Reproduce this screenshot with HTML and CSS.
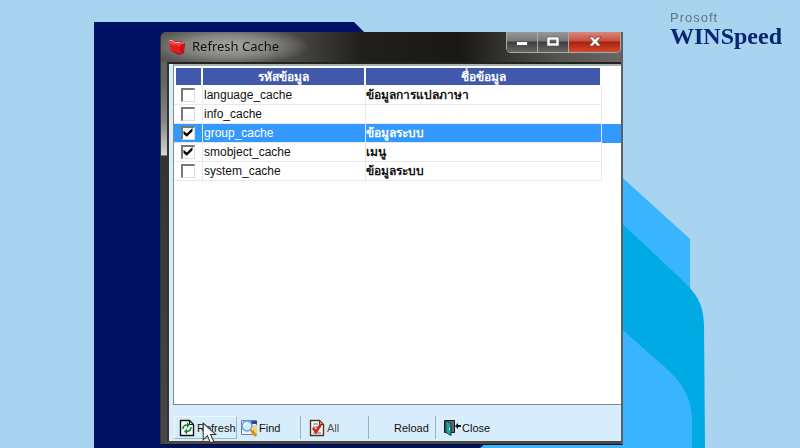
FILE: index.html
```html
<!DOCTYPE html>
<html lang="th">
<head>
<meta charset="utf-8">
<meta name="viewport" content="width=device-width, initial-scale=1">
<title>Refresh Cache</title>
<link rel="stylesheet" href="styles.css">
</head>
<body>
<svg class="backdrop" viewBox="0 0 800 448" preserveAspectRatio="xMinYMin slice" aria-hidden="true">
  <path fill="#39b5ff" d="M560 121 690 239V448H480V380Z"/>
  <path fill="#00aae3" d="M600 203 680 278C696 293 703 302 704 325L705 448H600Z"/>
  <path fill="#39b5ff" d="M600 310 668 370C686 387 691 400 692 420V448H480V440H600Z"/>
  <path fill="#001263" d="M94 22H354L620 285V448H94Z"/>
  <path fill="#39b5ff" d="M480 448 486 443H640V448Z"/>
</svg>
<main class="stage">
  <section class="window" aria-label="Refresh Cache">
    <header class="titlebar">
      <svg class="folder" viewBox="0 0 18 18" aria-hidden="true">
        <path fill="#9c1015" d="M3 3 17 4 16 15 11 17 3 13Z"/>
        <path fill="#e51b22" d="M1 2 5 2 7 4 13 4 12 16 3 13Z"/>
        <path fill="#f5413d" d="M1 2 5 2 7 4 13 4 12.500 8 1.500 6Z"/>
        <path fill="#c8141b" d="M13 5 17 4 15.500 14 12 16Z"/>
        <path fill="none" stroke="#ffb0a5" d="M1.500 2.500h3l2 2h6M13 5.500l3.500-1"/>
      </svg>
      <h1>Refresh Cache</h1>
      <div class="caption">
        <button type="button" class="cap" aria-label="Minimize"><svg viewBox="0 0 14 12"><path fill="#fff" stroke="#555" d="M1.500 5.500h11v4h-11z"/></svg></button>
        <button type="button" class="cap" aria-label="Maximize"><svg viewBox="0 0 14 12"><path fill="#fff" fill-rule="evenodd" stroke="#555" stroke-width=".6" d="M1 1h12v9H1zM4 4v3h6V4z"/></svg></button>
        <button type="button" class="cap cap-close" aria-label="Close window"><svg viewBox="0 0 14 12"><path fill="#fff" stroke="#6b3030" stroke-width=".7" d="M1 1h4l2 2.500L9 1h4L9.200 5.500 13 10H9L7 7.500 5 10H1l3.800-4.500z"/></svg></button>
      </div>
    </header>
    <div class="client">
      <div class="grid-area">
        <table>
          <colgroup><col class="c-tick"><col class="c-code"><col><col class="c-rest"></colgroup>
          <thead><tr><th></th><th>รหัสข้อมูล</th><th>ชื่อข้อมูล</th><td></td></tr></thead>
          <tbody>
            <tr><td><input type="checkbox" id="language" aria-label="language_cache"></td><td><label for="language">language_cache</label></td><td class="thai">ข้อมูลการแปลภาษา</td><td></td></tr>
            <tr><td><input type="checkbox" id="info" aria-label="info_cache"></td><td><label for="info">info_cache</label></td><td></td><td></td></tr>
            <tr class="selected"><td><input type="checkbox" id="group" aria-label="group_cache" checked></td><td><label for="group">group_cache</label></td><td class="thai">ข้อมูลระบบ</td><td></td></tr>
            <tr><td><input type="checkbox" id="smobject" aria-label="smobject_cache" checked></td><td><label for="smobject">smobject_cache</label></td><td class="thai">เมนู</td><td></td></tr>
            <tr><td><input type="checkbox" id="system" aria-label="system_cache"></td><td><label for="system">system_cache</label></td><td class="thai">ข้อมูลระบบ</td><td></td></tr>
          </tbody>
        </table>
      </div>
      <nav class="toolbar" aria-label="Actions">
        <button type="button" class="tool tool-refresh">
          <svg viewBox="0 0 16 18" aria-hidden="true"><path fill="#fff" stroke="#151515" stroke-width="1.400" d="M1.500 1.500h9l4 4v11h-13z"/><path fill="none" stroke="#151515" d="M10.500 1.500v4h4"/><path fill="none" stroke="#15882b" stroke-width="1.600" d="M4 10q0-4 4-4M12 8q0 4-4 4.500"/><path fill="#15882b" d="m8 3 3 3-3 3zM8 9.500l-3 3 3 3z"/></svg>Refresh
          <svg class="pointer" viewBox="0 0 14 21" aria-hidden="true"><path fill="#fff" stroke="#333" d="M1 1v16l4-4 3 7 3-1.500L8 12h5z"/></svg>
        </button>
        <button type="button" class="tool tool-find">
          <svg viewBox="0 0 18 18" aria-hidden="true"><path fill="#eef4ff" stroke="#6b78c4" d="M1.500 1.500h15v14h-15z"/><path fill="#323cb8" d="M11 2h6v3h-6z"/><path fill="#f5d46b" d="M13 6h4v9h-4z"/><path stroke="#d69321" stroke-width="3" d="m11 11 5 6"/><circle cx="7" cy="7" r="5" fill="#c9efff" stroke="#6d9fce" stroke-width="1.500"/><path fill="none" stroke="#fff" stroke-width="1.500" d="M4.500 7q0-2.500 2.500-3"/></svg>Find
        </button>
        <button type="button" class="tool tool-all">
          <svg viewBox="0 0 16 18" aria-hidden="true"><path fill="#fff8e5" stroke="#4e3525" stroke-width="1.400" d="M1.500 1.500h9l4 4v11h-13z"/><path fill="#e5b66c" stroke="#4e3525" d="M10.500 1.500v4h4z"/><path stroke="#5260b8" d="M4 5h5M4 8h8M4 14h8"/><path fill="none" stroke="#d5201b" stroke-width="2.600" d="m4 9 3 4 5-8"/></svg>All
        </button>
        <button type="button" class="tool tool-reload">Reload</button>
        <button type="button" class="tool tool-close">
          <svg viewBox="0 0 18 18" aria-hidden="true"><path fill="#666" stroke="#151515" d="M1.500 1.500h10v12h-10z"/><path fill="#20a8aa" stroke="#083e42" d="m3 1.500 5 3v12l-5-3z"/><path stroke="#dff" d="M6.500 9v2"/><path fill="#111" d="m12 7 3-3v2h3v2h-3v2z"/></svg>Close
        </button>
      </nav>
    </div>
  </section>
  <aside class="brand"><span>Prosoft</span><strong>WINSpeed</strong></aside>
</main>
</body>
</html>
```
FILE: styles.css
```css
* { box-sizing: border-box; }

body {
  margin: 0;
  background: #a9d4ef;
  color: #111;
  font-family: "Liberation Sans", Arial, sans-serif;
}

button { font: inherit; color: inherit; }

.backdrop {
  position: fixed;
  z-index: -1;
  inset: 0;
  width: 100%;
  height: 100%;
}

.stage {
  display: grid;
  grid-template-columns: minmax(0, 1fr) 130px;
  column-gap: 47px;
  min-height: 100vh;
  padding-left: 20%;
}

.window {
  display: flex;
  flex-direction: column;
  margin: 32px 0 3px;
  border-right: 2px solid #566168;
  border-bottom: 1px solid #111;
  border-left: 1px solid #333;
  border-top-left-radius: 6px;
  background: linear-gradient(#5a5855 0, #666 50px, #888 90px, #d5d5d5 123px, #333 124px, #484848 100%);
  overflow: hidden;
}

.titlebar {
  display: flex;
  align-items: center;
  height: 30px;
  padding-left: 7px;
  background:
    radial-gradient(ellipse 80px 20px at 68px 14px, #aaa8a4 0, #85837f 55%, transparent 100%),
    linear-gradient(90deg, #595754 0, #4c4a47 130px, #211f1c 200px, #191815 65%, #555350 86%, #696663 100%);
}

.folder { width: 18px; height: 18px; }

h1 {
  margin: 0 0 3px 6px;
  font: 13px/16px "Noto Sans", sans-serif;
}

.caption {
  display: flex;
  align-self: flex-start;
  margin-left: auto;
  border: 1px solid #aaa;
  border-top: 0;
  border-radius: 0 0 5px 5px;
  overflow: hidden;
}

.cap {
  display: grid;
  place-items: center;
  width: 31px;
  height: 20px;
  padding: 0;
  border: 0;
  border-right: 1px solid #aaa;
  background: linear-gradient(#999 0, #777 45%, #3e3e3e 50%, #666 100%);
}

.cap svg { width: 14px; height: 12px; }

.cap-close {
  width: 51px;
  border-right: 0;
  background: linear-gradient(#d9897a 0, #c85140 45%, #a91f10 50%, #d34b2d 100%);
}

.client {
  display: flex;
  flex: 1;
  flex-direction: column;
  margin: 0 0 3px 6px;
  border-top: 2px solid #222;
  border-left: 2px solid #333;
  background: #d8edfb;
}

.grid-area {
  flex: 1;
  margin-left: 4px;
  border: 1px solid #85898c;
  border-right: 0;
  border-top: 2px solid #a5b0b8;
  background: #fff;
}

table {
  width: 100%;
  border-collapse: separate;
  border-spacing: 0;
  table-layout: fixed;
}

.c-tick { width: 29px; }
.c-code { width: 163px; }
.c-rest { width: 19px; }

th, td {
  height: 19px;
  padding: 0;
  font-size: 12px;
  line-height: 16px;
  white-space: nowrap;
}

th {
  height: 20px;
  border-right: 2px solid #fff;
  border-top: 2px solid #fff;
  border-bottom: 1px solid #fff;
  background: #4059ad;
  color: #fff;
  font-weight: 700;
}

th:first-child { border-left: 2px solid #fff; }

tbody td {
  border-right: 1px solid #e8e8e8;
  border-bottom: 1px solid #e8e8e8;
}

tbody td:last-child { border: 0; }
tbody td:first-child { padding-left: 7px; }
tbody td:nth-child(2) { padding-left: 1px; }
.thai { font-weight: 700; }
label { display: block; }

.selected td { background: #3399fe; color: #fff; }

input {
  display: block;
  width: 14px;
  height: 14px;
  margin: 0;
  border: 1px solid #ddd;
  border-top: 2px solid #777;
  border-left: 2px solid #777;
  background: #fff;
  appearance: none;
}

input:checked::before {
  content: "";
  display: block;
  width: 10px;
  height: 9px;
  background: #000;
  clip-path: polygon(5% 30%, 38% 60%, 95% 0, 95% 35%, 38% 98%, 5% 66%);
}

.toolbar {
  display: flex;
  align-items: center;
  height: 36px;
  padding: 9px 0 0 5px;
  font-size: 11px;
}

.tool {
  display: flex;
  align-items: center;
  gap: 1px;
  height: 23px;
  padding: 0;
  border: 0;
  background: none;
}

.tool svg { flex: none; width: 18px; height: 18px; }

.tool-refresh {
  position: relative;
  width: 63px;
  padding-left: 3px;
  border: 1px solid #eef9ff;
  border-right-color: #a5b6c1;
  border-bottom-color: #a5b6c1;
}

.tool .pointer {
  position: absolute;
  left: 27px;
  top: 5px;
  width: 15px;
  height: 22px;
}

.tool-find { width: 64px; padding-left: 3px; border-right: 1px solid #a8afb3; }
.tool-all { width: 68px; padding-left: 7px; border-right: 1px solid #a8afb3; color: #555; }
.tool-reload { width: 67px; padding-left: 25px; border-right: 1px solid #a8afb3; }
.tool-close { padding-left: 7px; }

.brand {
  display: flex;
  flex-direction: column;
  padding-top: 11px;
}

.brand span {
  color: #62747e;
  font-size: 13px;
  line-height: 13px;
  letter-spacing: 1px;
}

.brand strong {
  color: #082574;
  font: 700 24px/24px "Liberation Serif", "Times New Roman", serif;
}
```
